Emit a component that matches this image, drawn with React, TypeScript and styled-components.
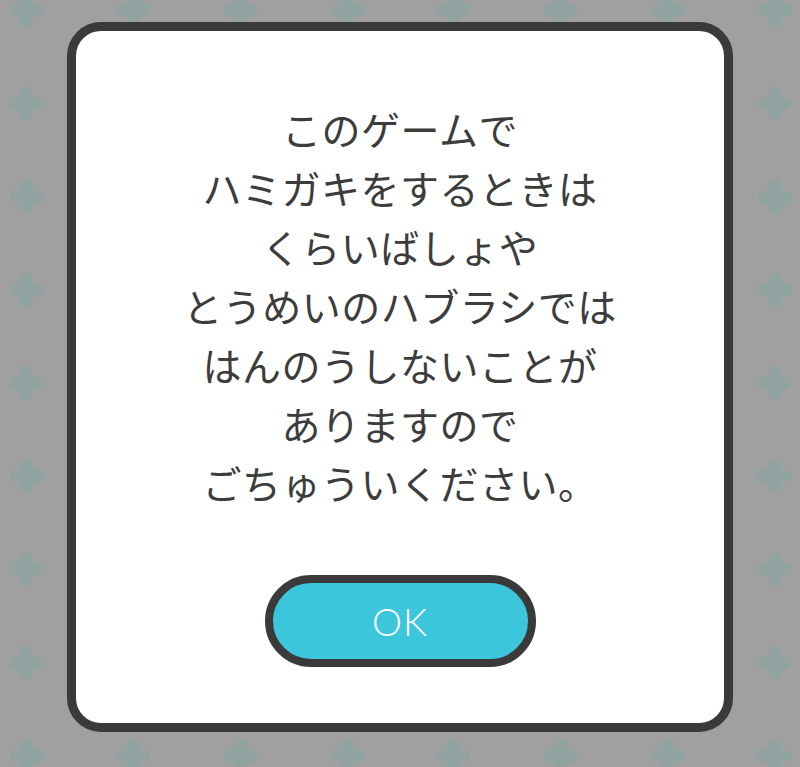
import styled, { createGlobalStyle } from 'styled-components';

const plusTile = `<svg xmlns="http://www.w3.org/2000/svg" width="107" height="93" viewBox="0 0 106.8 93.2"><g fill="#91a3a0" transform="translate(53.4 46.6)"><rect x="-17" y="-6.5" width="34" height="13" rx="6"/><rect x="-6.5" y="-17" width="13" height="34" rx="6"/></g></svg>`;

const GlobalStyle = createGlobalStyle`
  html,
  body {
    margin: 0;
    padding: 0;
  }

  body {
    background-color: #a0a0a0;
    background-image: url("data:image/svg+xml,${encodeURIComponent(plusTile)}");
    background-size: 106.8px 93.2px;
    background-position: -26.7px -36.3px;
  }
`;

const messageLines = [
  'このゲームで',
  'ハミガキをするときは',
  'くらいばしょや',
  'とうめいのハブラシでは',
  'はんのうしないことが',
  'ありますので',
  'ごちゅういください。',
];

export default function App() {
  return (
    <>
      <GlobalStyle />
      <Screen>
        <Dialog role="dialog">
          <Message>
            {messageLines.map((line) => (
              <Line key={line}>{line}</Line>
            ))}
          </Message>
          <OkButton type="button">OK</OkButton>
        </Dialog>
      </Screen>
    </>
  );
}

const Screen = styled.div`
  min-height: 767px;
  display: flex;
  justify-content: center;
  align-items: flex-start;
  padding-top: 22px;
  box-sizing: border-box;
`;

const Dialog = styled.div`
  width: 666px;
  height: 710px;
  box-sizing: border-box;
  padding: 68px 0 56px;

  display: flex;
  flex-direction: column;
  align-items: center;

  background-color: #ffffff;
  border: 9px solid #3a3a3a;
  border-radius: 34px;
`;

const Message = styled.div`
  display: flex;
  flex-direction: column;
  align-items: center;

  color: #3c3c3c;
  font-family: 'Noto Sans CJK JP', 'Noto Sans', sans-serif;
  font-size: 39px;
  font-weight: 400;
  letter-spacing: 0.5px;
`;

const Line = styled.p`
  margin: 0;
  line-height: 59px;
  text-align: center;
  white-space: nowrap;
`;

const OkButton = styled.button`
  margin-top: auto;
  width: 271px;
  height: 92px;
  box-sizing: border-box;

  display: flex;
  justify-content: center;
  align-items: center;

  background-color: #3cc6dc;
  border: 8px solid #3a3a3a;
  border-radius: 46px;

  color: #ffffff;
  font-family: Lato, 'Noto Sans', sans-serif;
  font-size: 38px;
  font-weight: 300;
  letter-spacing: 1px;
  cursor: pointer;
`;
